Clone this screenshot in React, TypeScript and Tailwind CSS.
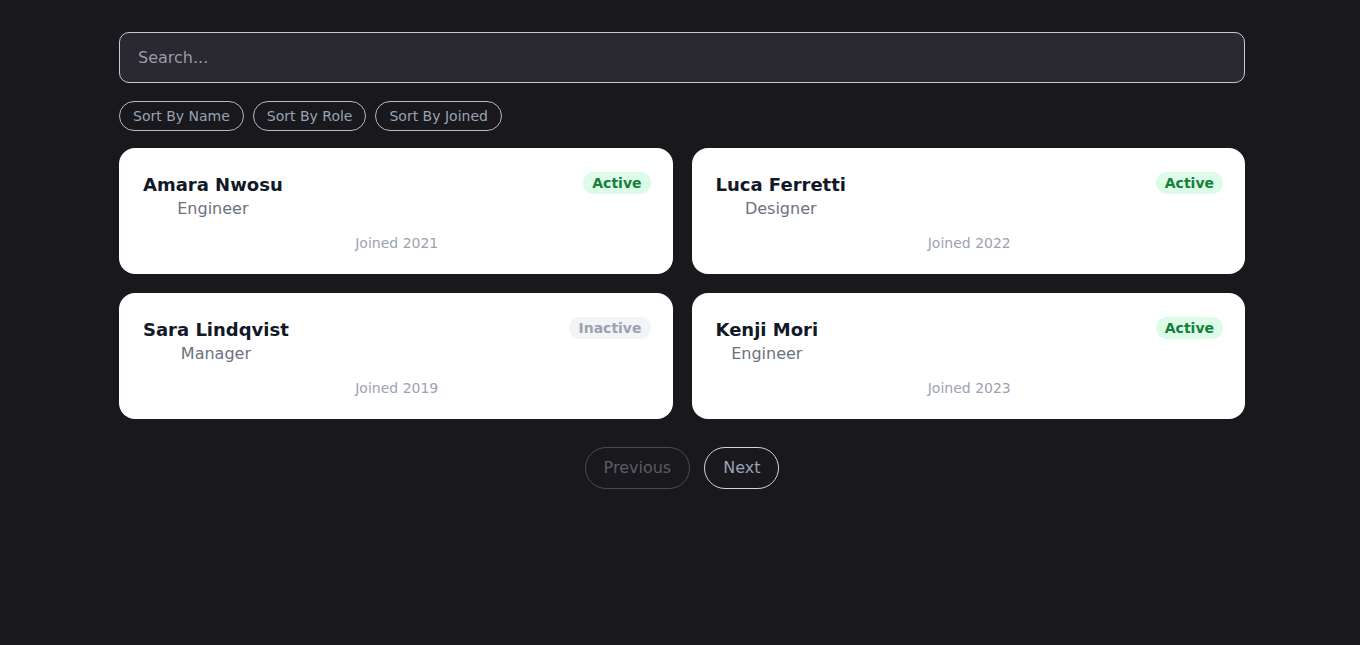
const people = [
  { name: "Amara Nwosu", role: "Engineer", joined: 2021, active: true },
  { name: "Luca Ferretti", role: "Designer", joined: 2022, active: true },
  { name: "Sara Lindqvist", role: "Manager", joined: 2019, active: false },
  { name: "Kenji Mori", role: "Engineer", joined: 2023, active: true },
];

const sorts = ["Sort By Name", "Sort By Role", "Sort By Joined"];

const App = () => {
  return (
    <div className="min-h-screen bg-[#18181d] pt-8 font-['DejaVu_Sans',sans-serif]">
      <div className="ml-[119px] w-[1126px]">
        <input
          type="text"
          placeholder="Search..."
          className="h-[51px] w-full rounded-[10px] border border-[#c9c9d0] bg-[#2a2831] px-[18px] text-base text-gray-200 placeholder:text-[#9a9aa6] outline-none"
        />
        <div className="mt-[18px] flex gap-[9px]">
          {sorts.map((s) => (
            <button
              key={s}
              className="rounded-full border border-[#b8b8c0] px-[13px] py-1 text-sm text-[#9aa3b2]"
            >
              {s}
            </button>
          ))}
        </div>
        <div className="mt-[17px] grid grid-cols-2 gap-x-[19px] gap-y-[19px]">
          {people.map((p) => (
            <div
              key={p.name}
              className="rounded-2xl bg-white pt-6 pb-[21px] pl-6 pr-[22px]"
            >
              <div className="flex items-start justify-between">
                <div className="flex flex-col items-center">
                  <h3 className="text-lg leading-[25px] font-bold text-[#111827]">
                    {p.name}
                  </h3>
                  <span className="text-base text-[#6b7280]">{p.role}</span>
                </div>
                {p.active ? (
                  <span className="rounded-full bg-[#dcfce7] px-[9px] py-px text-sm font-bold text-[#15803d]">
                    Active
                  </span>
                ) : (
                  <span className="rounded-full bg-[#f3f4f6] px-[9px] py-px text-sm font-bold text-[#9ca3af]">
                    Inactive
                  </span>
                )}
              </div>
              <p className="mt-3 text-center text-sm text-[#9ca3af]">
                Joined {p.joined}
              </p>
            </div>
          ))}
        </div>
        <div className="mt-7 flex justify-center gap-3.5">
          <button
            disabled
            className="rounded-full border border-[#4b4b55] px-[18px] py-2 text-base text-[#5c5c66]"
          >
            Previous
          </button>
          <button className="rounded-full border border-[#d4d4d8] px-[18px] py-2 text-base text-[#9aa3b2]">
            Next
          </button>
        </div>
      </div>
    </div>
  );
};

export default App;
